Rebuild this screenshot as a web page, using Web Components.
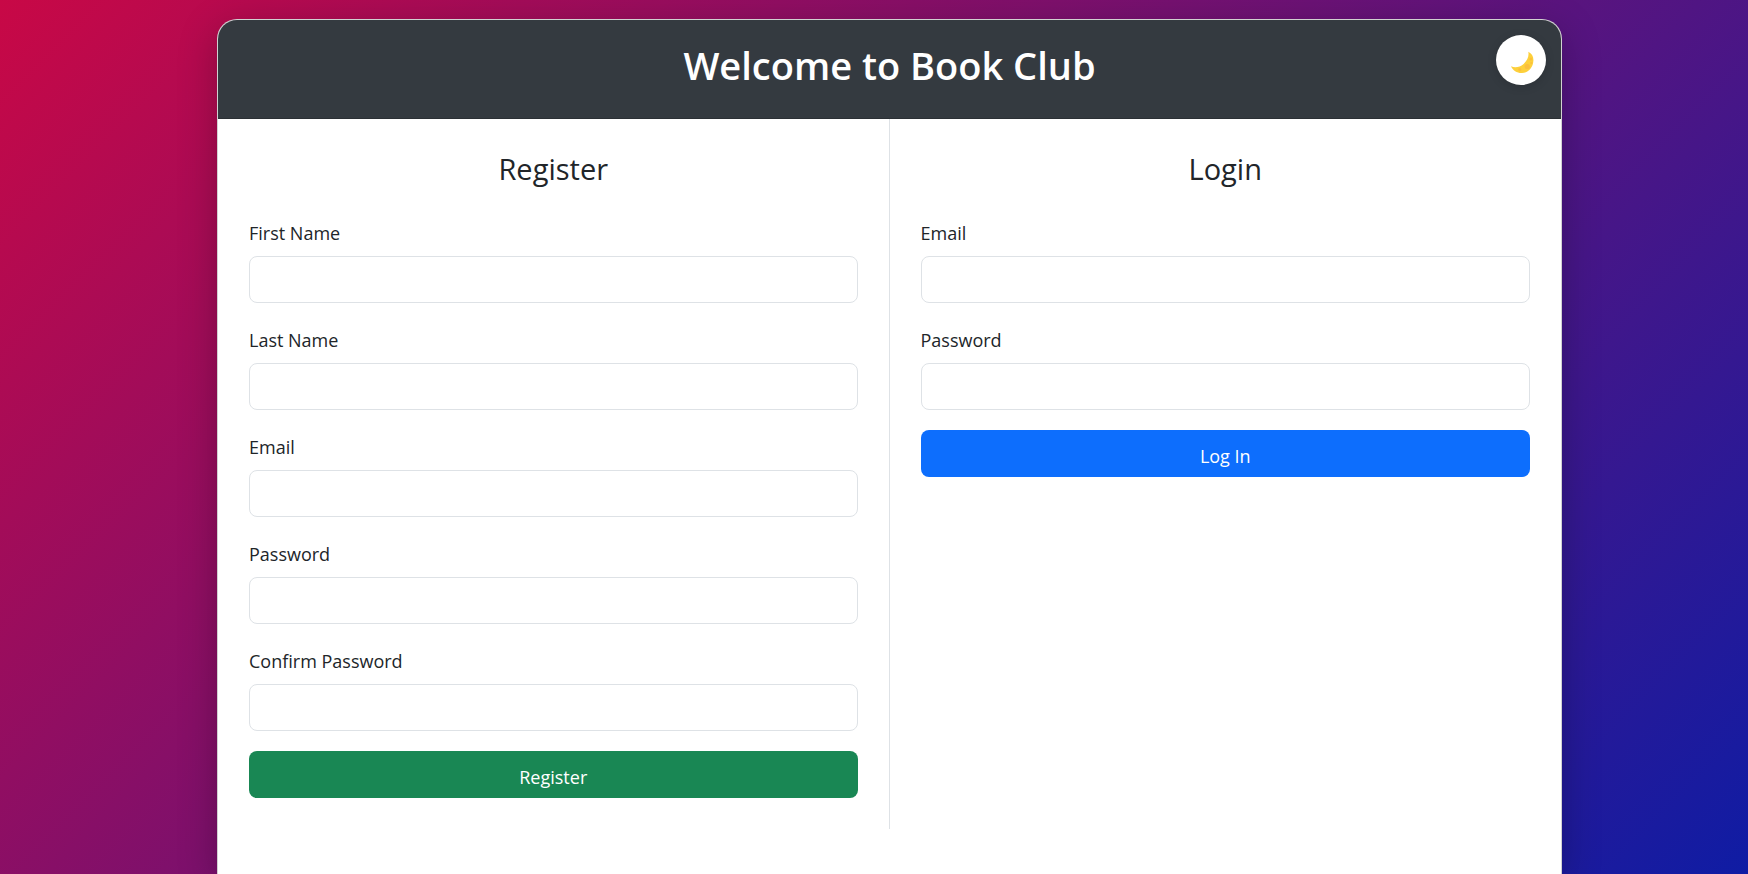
<!DOCTYPE html>
<html lang="en">
<head>
<meta charset="utf-8">
<meta name="viewport" content="width=device-width, initial-scale=1">
<title>Book Club</title>
<style>
  body {
    margin: 0;
    font-family: "Open Sans", "Noto Sans", sans-serif;
    font-size: 18px;
    line-height: 30px;
    color: #212529;
    background: linear-gradient(135deg, #c80846, #0f1ca4) no-repeat;
    min-height: 100vh;
  }
</style>
</head>
<body>
<club-page>
  <club-header slot="header">Welcome to Book Club</club-header>
  <club-panel heading="Register" divided>
    <club-field label="First Name" type="text"></club-field>
    <club-field label="Last Name" type="text"></club-field>
    <club-field label="Email" type="email"></club-field>
    <club-field label="Password" type="password"></club-field>
    <club-field label="Confirm Password" type="password"></club-field>
    <club-button variant="success">Register</club-button>
  </club-panel>
  <club-panel heading="Login">
    <club-field label="Email" type="email"></club-field>
    <club-field label="Password" type="password"></club-field>
    <club-button variant="primary">Log In</club-button>
  </club-panel>
</club-page>

<script>
class ClubElement extends HTMLElement {
  render(html) {
    this.attachShadow({ mode: 'open' }).innerHTML = html;
  }
}

customElements.define('club-page', class extends ClubElement {
  connectedCallback() {
    this.render(`
      <style>
        :host { display: flex; box-sizing: border-box; min-height: 100vh; padding: 19px 186px 0 217px; }
        main {
          flex: 1; min-width: 0; box-sizing: border-box;
          border: 1px solid rgba(0, 0, 0, .175); border-bottom: 0;
          border-radius: 20px 20px 0 0;
          background: #fff;
          box-shadow: 0 10px 38px rgba(0, 0, 0, .25);
        }
        .columns { display: grid; grid-template-columns: 1fr 1fr; }
      </style>
      <main><slot name="header"></slot><div class="columns"><slot></slot></div></main>`);
  }
});

customElements.define('club-header', class extends ClubElement {
  connectedCallback() {
    this.render(`
      <style>
        :host {
          display: block; position: relative; padding: 21px 80px 29px;
          border-bottom: 1px solid #2b3035; border-radius: 19px 19px 0 0;
          background: #343a40; color: #fff;
        }
        h1 { margin: 0; font-size: 38px; line-height: 48px; font-weight: 600; text-align: center; }
        button {
          position: absolute; top: 15px; right: 15px;
          width: 50px; height: 50px; padding: 0; border: 0; border-radius: 50%;
          background: #fff; box-shadow: 0 2px 10px rgba(0, 0, 0, .15); cursor: pointer;
        }
        svg { display: block; }
      </style>
      <h1><slot></slot></h1>
      <button type="button" aria-label="Dark mode">
        <svg width="50" height="50" viewBox="0 0 50 50" aria-hidden="true">
          <path fill="#fdd03b" d="M32.3 16.7C35.8 18.3 37.6 21.5 37.4 25.5C37.1 32.5 32.5 37.8 26 38.1C21.2 38.3 16.8 35.7 15 31.3C19.2 33 23.8 32.2 27.6 28.9C31.4 25.5 33.2 21.3 32.3 16.7Z"/>
          <g fill="#fbbf3c">
            <circle cx="31.2" cy="31.5" r="2.6"/>
            <circle cx="23.8" cy="34.6" r="1.6"/>
            <circle cx="34.8" cy="24" r="1.5"/>
            <circle cx="35.3" cy="28" r="1"/>
          </g>
        </svg>
      </button>`);
  }
});

customElements.define('club-panel', class extends ClubElement {
  connectedCallback() {
    this.render(`
      <style>
        :host { display: block; min-width: 0; padding: 31px; }
        :host([divided]) { border-right: 1px solid #dee2e6; }
        h2 { margin: 0 0 28px; font-size: 29px; line-height: 38px; font-weight: 500; text-align: center; }
        form { display: grid; gap: 20px; }
      </style>
      <h2>${this.getAttribute('heading')}</h2>
      <form><slot></slot></form>`);
  }
});

customElements.define('club-field', class extends ClubElement {
  connectedCallback() {
    this.render(`
      <style>
        :host { display: grid; gap: 6px; }
        label { line-height: 34px; }
        input {
          box-sizing: border-box; width: 100%; height: 47px; padding: 8px 15px;
          border: 1px solid #dee2e6; border-radius: 8px;
          background: #fff; color: inherit; font: inherit;
        }
      </style>
      <label for="control">${this.getAttribute('label')}</label>
      <input id="control" type="${this.getAttribute('type')}">`);
  }
});

customElements.define('club-button', class extends ClubElement {
  connectedCallback() {
    this.render(`
      <style>
        :host { display: block; --fill: #0d6efd; }
        :host([variant="success"]) { --fill: #198754; }
        button {
          display: block; width: 100%; height: 47px; padding: 5px 15px 0;
          border: 0; border-radius: 8px; background: var(--fill); color: #fff;
          font: inherit; cursor: pointer;
        }
      </style>
      <button type="button"><slot></slot></button>`);
  }
});
</script>
</body>
</html>
